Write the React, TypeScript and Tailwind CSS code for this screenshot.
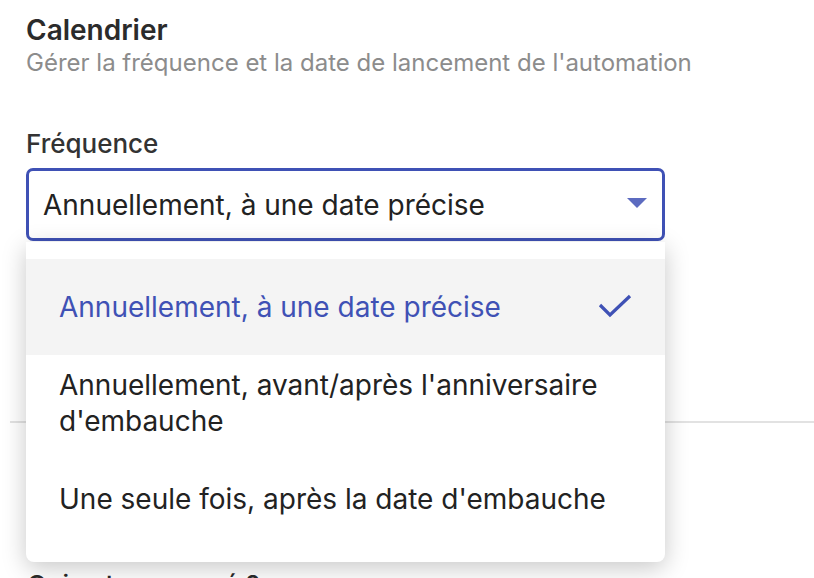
import { useState } from "react";

const options = [
  "Annuellement, à une date précise",
  "Annuellement, avant/après l'anniversaire d'embauche",
  "Une seule fois, après la date d'embauche",
];

export default function App() {
  const [selected, setSelected] = useState(0);

  return (
    <div className="relative h-[578px] w-[814px] overflow-hidden bg-white font-['Inter',sans-serif]">
      {/* Section calendrier */}
      <div className="pl-[26px] pt-[13px]">
        <h2 className="text-[28px] font-semibold leading-[34px] text-[#2b2b2b]">Calendrier</h2>
        <p className="text-[24px] leading-[32px] text-[#8c8c8c]">
          Gérer la fréquence et la date de lancement de l'automation
        </p>

        <label className="mt-[49px] block text-[26px] font-medium leading-[32px] text-[#333333]">
          Fréquence
        </label>

        <div className="relative mt-[8px] w-[639px]">
          <div className="flex h-[73px] items-center justify-between rounded-[7px] border-[3px] border-[#3f51b5] bg-white pl-[14px] pr-[15px]">
            <span className="text-[28px] leading-[36px] text-[#222222]">{options[selected]}</span>
            <svg width="20" height="11" viewBox="0 0 20 11" className="mb-[3px]">
              <path d="M0 0 L20 0 L10 10 Z" fill="#5c6bc0" />
            </svg>
          </div>

          {/* Menu déroulant */}
          <div className="absolute left-0 top-[74px] z-10 w-[639px] rounded-b-[8px] bg-white pb-[15px] pt-[17px] shadow-[0_6px_24px_rgba(0,0,0,0.22)]">
            {options.map((opt, i) => (
              <div
                key={i}
                onClick={() => setSelected(i)}
                className={`flex min-h-[96px] items-center justify-between py-[12px] pl-[33px] pr-[32px] ${
                  i === selected ? "bg-[#f4f4f4] text-[#3f51b5]" : "text-[#222222]"
                }`}
              >
                <span className="max-w-[566px] text-[28px] leading-[36px]">{opt}</span>
                {i === selected && (
                  <svg width="36" height="26" viewBox="0 0 36 26" className="shrink-0">
                    <path d="M3 11 L13 21 L33 2" fill="none" stroke="#3f51b5" strokeWidth="3.2" />
                  </svg>
                )}
              </div>
            ))}
          </div>
        </div>
      </div>

      {/* Séparateur */}
      <div className="ml-[10px] mt-[180px] h-[2px] bg-[#e2e2e2]" />

      <div className="pl-[27px] pt-[146px]">
        <h3 className="text-[26px] font-medium leading-[32px] text-[#2b2b2b]">Qui est concerné ?</h3>
      </div>
    </div>
  );
}
